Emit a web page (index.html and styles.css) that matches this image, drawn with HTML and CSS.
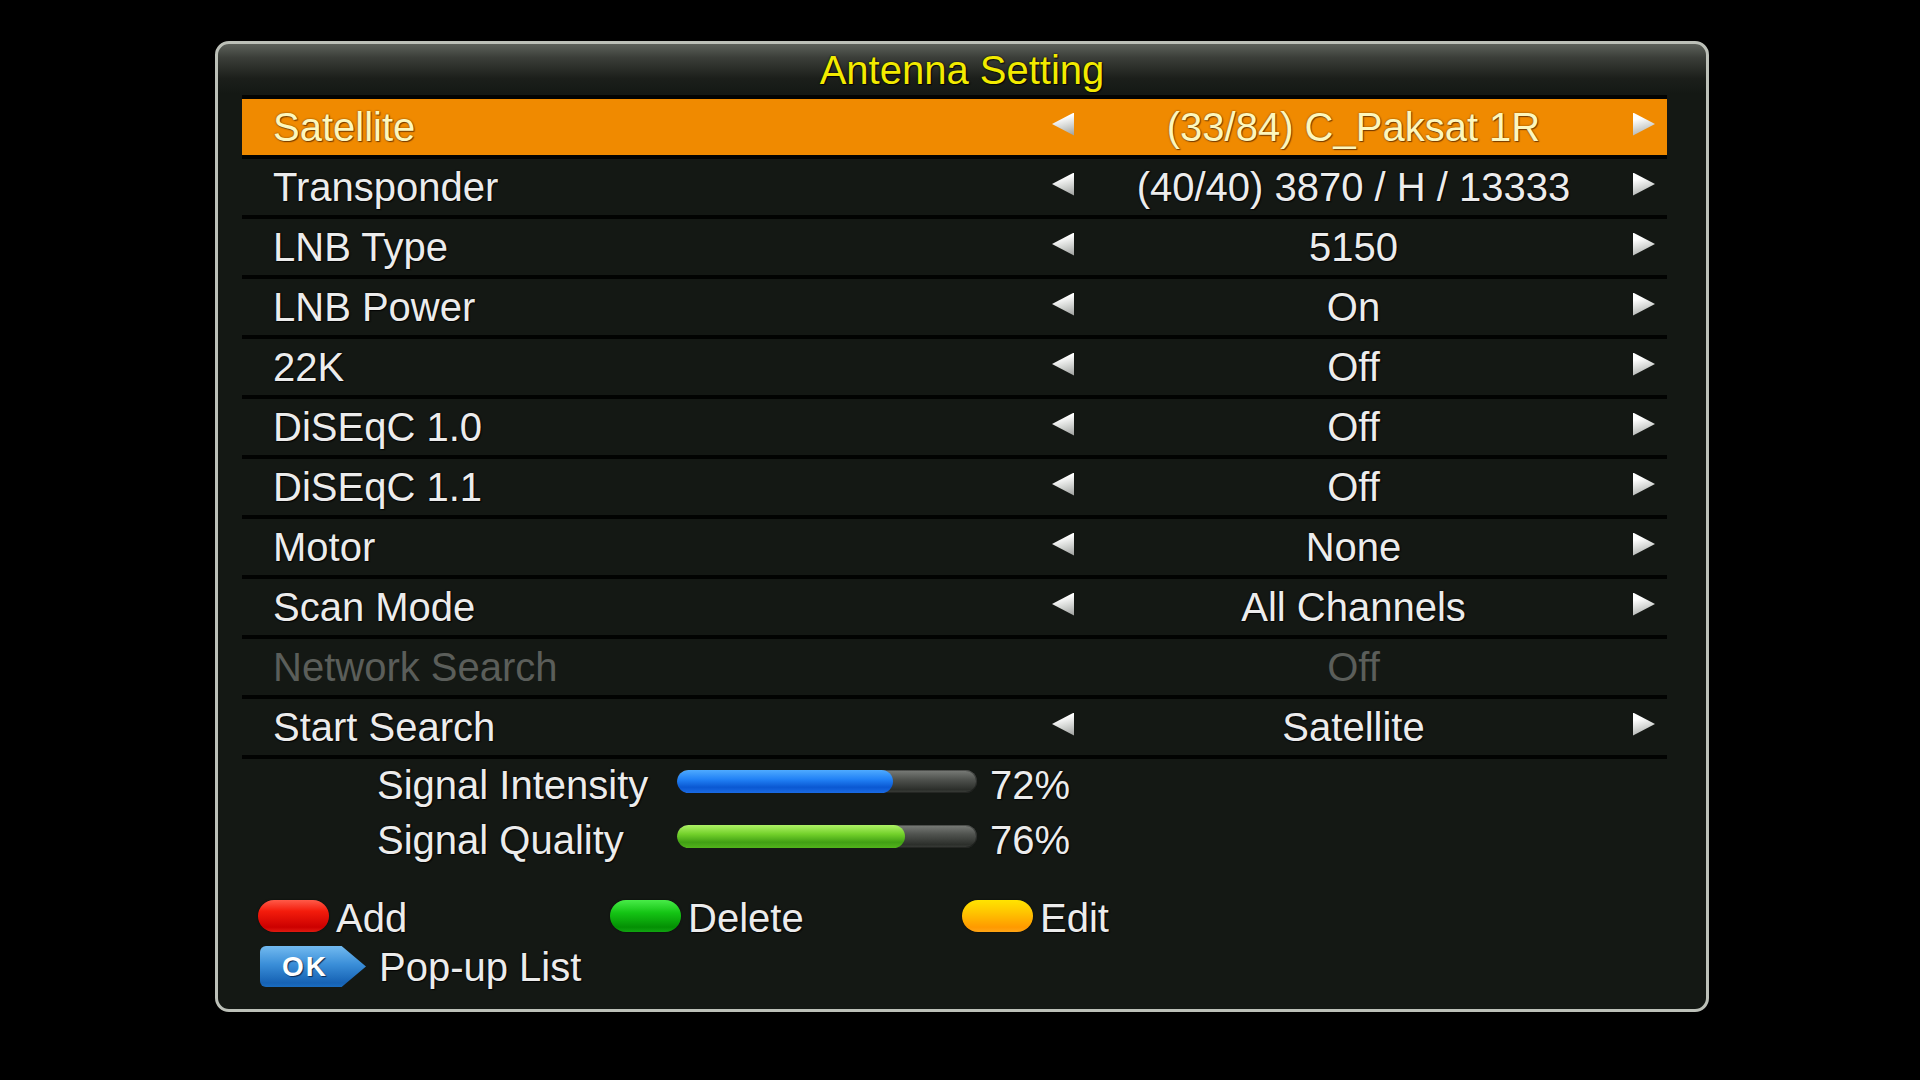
FILE: index.html
```html
<!DOCTYPE html>
<html lang="en">
<head>
    <meta charset="UTF-8">
    <meta name="viewport" content="width=device-width, initial-scale=1.0">
    <title>Antenna Setting</title>
    <link rel="stylesheet" href="styles.css">
</head>
<body>
    <div class="panel">
        <div class="panel-title">Antenna Setting</div>

        <ul class="menu">
            <li class="item selected">
                <span class="label">Satellite</span>
                <i class="arrow left"></i>
                <span class="value">(33/84) C_Paksat 1R</span>
                <i class="arrow right"></i>
            </li>
            <li class="item">
                <span class="label">Transponder</span>
                <i class="arrow left"></i>
                <span class="value">(40/40) 3870 / H / 13333</span>
                <i class="arrow right"></i>
            </li>
            <li class="item">
                <span class="label">LNB Type</span>
                <i class="arrow left"></i>
                <span class="value">5150</span>
                <i class="arrow right"></i>
            </li>
            <li class="item">
                <span class="label">LNB Power</span>
                <i class="arrow left"></i>
                <span class="value">On</span>
                <i class="arrow right"></i>
            </li>
            <li class="item">
                <span class="label">22K</span>
                <i class="arrow left"></i>
                <span class="value">Off</span>
                <i class="arrow right"></i>
            </li>
            <li class="item">
                <span class="label">DiSEqC 1.0</span>
                <i class="arrow left"></i>
                <span class="value">Off</span>
                <i class="arrow right"></i>
            </li>
            <li class="item">
                <span class="label">DiSEqC 1.1</span>
                <i class="arrow left"></i>
                <span class="value">Off</span>
                <i class="arrow right"></i>
            </li>
            <li class="item">
                <span class="label">Motor</span>
                <i class="arrow left"></i>
                <span class="value">None</span>
                <i class="arrow right"></i>
            </li>
            <li class="item">
                <span class="label">Scan Mode</span>
                <i class="arrow left"></i>
                <span class="value">All Channels</span>
                <i class="arrow right"></i>
            </li>
            <li class="item disabled">
                <span class="label">Network Search</span>
                <i></i>
                <span class="value">Off</span>
                <i></i>
            </li>
            <li class="item">
                <span class="label">Start Search</span>
                <i class="arrow left"></i>
                <span class="value">Satellite</span>
                <i class="arrow right"></i>
            </li>
        </ul>

        <div class="signal">
            <div class="signal-row">
                <span class="signal-name">Signal Intensity</span>
                <div class="bar"><div class="bar-fill intensity" style="width: 72%"></div></div>
                <span class="signal-pct">72%</span>
            </div>
            <div class="signal-row">
                <span class="signal-name">Signal Quality</span>
                <div class="bar"><div class="bar-fill quality" style="width: 76%"></div></div>
                <span class="signal-pct">76%</span>
            </div>
        </div>

        <div class="keys">
            <div class="key-row colour-keys">
                <div class="key"><span class="pill red"></span>Add</div>
                <div class="key"><span class="pill green"></span>Delete</div>
                <div class="key"><span class="pill yellow"></span>Edit</div>
            </div>
            <div class="key-row ok-row">
                <div class="key"><span class="ok-key">OK</span>Pop-up List</div>
            </div>
        </div>
    </div>
</body>
</html>
```

FILE: styles.css
```css
body {
    margin: 0;
    background: #000;
    font-family: "Liberation Sans", Arial, sans-serif;
    color: #ececec;
}
.panel {
    box-sizing: border-box;
    width: 1494px;
    height: 971px;
    margin: 41px 0 0 215px;
    border: 3px solid #bcc0b8;
    border-radius: 14px;
    background: linear-gradient(to bottom, #5d615b 0, #3a3d38 14px, #1c1f1b 34px, #141814 50px);
    text-shadow: 0 0 2px #000, 1px 1px 1px rgba(0, 0, 0, 0.8);
}
.panel-title {
    height: 51px;
    line-height: 53px;
    text-align: center;
    font-size: 40px;
    color: #f2ea00;
}

/* settings list */
.menu {
    list-style: none;
    margin: 0 39px 0 24px;
    padding: 0;
}
.item {
    display: grid;
    grid-template-columns: 779px 22px 1fr 22px;
    align-items: center;
    height: 56px;
    padding: 0 12px 0 31px;
    border-top: 4px solid #020302;
    font-size: 40px;
    line-height: 56px;
    white-space: nowrap;
}
.item:last-child {
    border-bottom: 4px solid #020302;
}
.item.selected {
    background: #f08a00;
    color: #fdf7bd;
    text-shadow: 0 0 2px rgba(110, 60, 0, 0.9), 1px 1px 1px rgba(90, 40, 0, 0.8);
}
.item.disabled {
    color: #5b5e5a;
    text-shadow: none;
}
.value {
    text-align: center;
}
.arrow {
    display: block;
    width: 22px;
    height: 23px;
    margin-bottom: 6px;
    background: linear-gradient(165deg, #ffffff 25%, #d8dad8 55%, #9c9e9c 100%);
}
.arrow.left {
    clip-path: polygon(0 50%, 100% 0, 100% 100%);
}
.arrow.right {
    clip-path: polygon(0 0, 100% 50%, 0 100%);
}

/* signal meters */
.signal {
    display: flex;
    flex-direction: column;
    gap: 11px;
    margin: 4px 0 0 159px;
}
.signal-row {
    display: flex;
    align-items: center;
    height: 44px;
    font-size: 40px;
}
.signal-name {
    width: 300px;
}
.bar {
    width: 300px;
    height: 23px;
    margin-top: -7px;
    border-radius: 12px;
    overflow: hidden;
    background: linear-gradient(#7a7d79, #50534f 40%, #2c2f2b 85%, #3a3d39);
    box-shadow: inset 0 0 0 1px rgba(0, 0, 0, 0.35);
}
.bar-fill {
    height: 100%;
    border-radius: 12px;
}
.intensity {
    background: linear-gradient(#4eaaff, #2282f6 40%, #0a58d2 75%, #1a6ae4);
}
.quality {
    background: linear-gradient(#aef266, #72d02a 40%, #41a014 75%, #52b41c);
}
.signal-pct {
    margin-left: 13px;
}

/* colour key hints */
.keys {
    margin: 40px 0 0 40px;
}
.key-row {
    display: flex;
    align-items: center;
    height: 32px;
    font-size: 40px;
    line-height: 44px;
}
.colour-keys .key {
    width: 352px;
}
.colour-keys .pill {
    margin-top: -5px;
}
.ok-row {
    height: 41px;
    margin-top: 12px;
}
.key {
    display: flex;
    align-items: center;
    gap: 7px;
}
.pill {
    width: 71px;
    height: 32px;
    border-radius: 16px;
    box-shadow: 0 0 2px rgba(0, 0, 0, 0.6);
}
.red {
    background: linear-gradient(#ff5a48, #f41c0c 35%, #cc0000 85%, #e01a10);
}
.green {
    background: linear-gradient(#48ec48, #14c414 40%, #049004 85%, #10a410);
}
.yellow {
    background: linear-gradient(#ffe400, #ffc800 35%, #ff9a00 85%, #ffa414);
}
.ok-key {
    display: flex;
    align-items: center;
    box-sizing: border-box;
    width: 106px;
    height: 41px;
    margin: 0 6px 0 2px;
    padding-left: 22px;
    border-radius: 6px 0 0 6px;
    clip-path: polygon(0 0, 77% 0, 100% 50%, 77% 100%, 0 100%);
    background: linear-gradient(#72baf0, #3a8ed8 45%, #1662b4 90%, #1a6cc0);
    color: #fff;
    font-size: 28px;
    font-weight: bold;
    letter-spacing: 2px;
    line-height: 41px;
    text-shadow: 1px 1px 1px #0a2a55;
}
```
